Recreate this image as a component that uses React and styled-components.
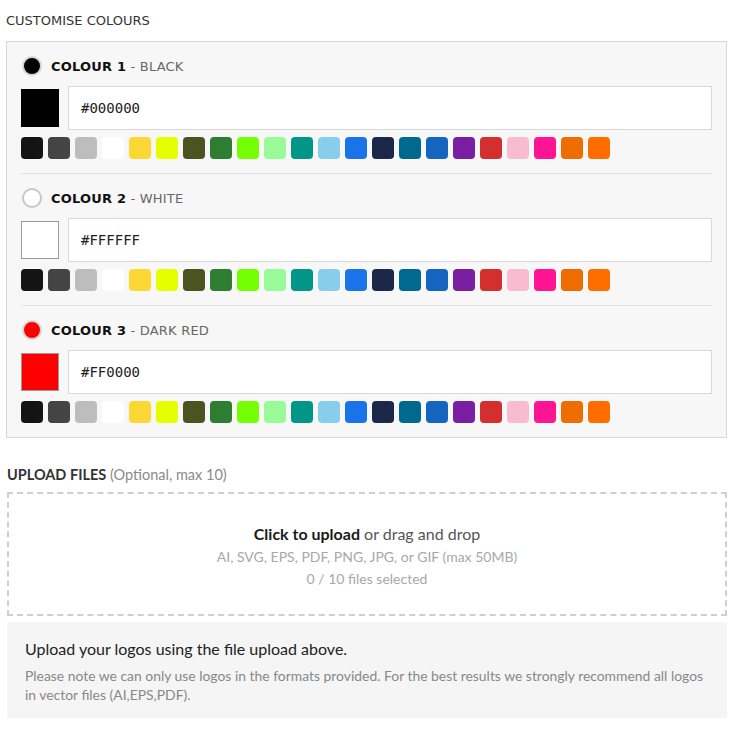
import React from "react";
import styled, { createGlobalStyle } from "styled-components";

const Global = createGlobalStyle`
  html, body { margin: 0; padding: 0; background: #ffffff; }
  body { font-family: Lato, "Noto Sans", sans-serif; color: #333; }
  * { box-sizing: border-box; }
`;

const Page = styled.div`
  width: 734px;
  padding: 11px 7px 16px 6px;
  display: flex;
  flex-direction: column;
`;

const SectionTitle = styled.div`
  font-family: "DejaVu Sans", sans-serif;
  font-size: 13px;
  line-height: 20px;
  color: #333;
  margin-bottom: 10px;
`;

const ColourBox = styled.div`
  border: 1px solid #d8d8d8;
  background: #f7f7f7;
  padding: 0 14px;
  display: flex;
  flex-direction: column;
`;

const ColourSection = styled.div`
  padding: 13px 0 14px;
  border-top: ${(p) => (p.$first ? "none" : "1px solid #e2e2e2")};
  display: flex;
  flex-direction: column;
`;

const LabelRow = styled.div`
  display: flex;
  align-items: center;
  height: 22px;
  gap: 9px;
  font-family: "DejaVu Sans", sans-serif;
  font-size: 13px;
  letter-spacing: 0.2px;
  padding-left: 1px;
`;

const Radio = styled.span`
  width: 20px;
  height: 20px;
  border-radius: 50%;
  border: 2px solid ${(p) => (p.$filled ? "#d6d6d6" : "#c8c8c8")};
  background: ${(p) => (p.$filled ? p.$color : "#ffffff")};
  flex: none;
`;

const LabelStrong = styled.span`
  font-weight: 700;
  color: #111;
`;

const LabelName = styled.span`
  color: #666;
`;

const InputRow = styled.div`
  display: flex;
  align-items: center;
  gap: 9px;
  margin-top: 9px;
`;

const BigSwatch = styled.div`
  width: 38px;
  height: 38px;
  flex: none;
  background: ${(p) => p.$color};
  border: 1px solid ${(p) => (p.$color === "#000000" ? "#000" : "#9a9a9a")};
`;

const HexInput = styled.div`
  flex: 1;
  height: 44px;
  background: #fff;
  border: 1px solid #d9d9d9;
  display: flex;
  align-items: center;
  padding-left: 12px;
  font-family: "DejaVu Sans Mono", monospace;
  font-size: 14px;
  color: #222;
`;

const Palette = styled.div`
  display: flex;
  gap: 5px;
  margin-top: 7px;
`;

const Swatch = styled.span`
  width: 22px;
  height: 22px;
  border-radius: 4px;
  background: ${(p) => p.$color};
  flex: none;
`;

const UploadTitle = styled.div`
  margin-top: 29px;
  font-size: 14.5px;
  line-height: 16px;
  padding-left: 1px;
`;

const UploadStrong = styled.span`
  font-weight: 700;
  color: #333;
`;

const UploadMuted = styled.span`
  color: #8a8a8a;
`;

const DropZone = styled.div`
  margin: 9px 0 0 1px;
  height: 124px;
  border: 2px dashed #cfcfcf;
  display: flex;
  flex-direction: column;
  align-items: center;
  justify-content: center;
  padding-top: 3px;
`;

const DropMain = styled.div`
  font-size: 16px;
  line-height: 24px;
  color: #555;
`;

const DropStrong = styled.span`
  font-weight: 700;
  color: #1a1a1a;
`;

const DropHint = styled.div`
  font-size: 14px;
  line-height: 22px;
  color: #a8a8a8;
`;

const InfoBox = styled.div`
  margin: 6px 0 0 1px;
  background: #f5f5f5;
  padding: 16px 18px 14px;
`;

const InfoTitle = styled.div`
  font-size: 16px;
  line-height: 22px;
  color: #222;
  margin-bottom: 6px;
`;

const InfoText = styled.div`
  font-size: 13.9px;
  line-height: 19px;
  color: #888;
`;

const PALETTE = [
  "#141414", "#444444", "#bdbdbd", "#ffffff", "#fdd835", "#e5ff00",
  "#4b5320", "#2e7d32", "#76ff03", "#98fb98", "#009688", "#87ceeb",
  "#1a73e8", "#1b2847", "#00698f", "#1565c0", "#7b1fa2", "#d32f2f",
  "#f8bbd0", "#ff1493", "#ef6c00", "#ff6d00",
];

const COLOURS = [
  { n: 1, name: "BLACK", hex: "#000000" },
  { n: 2, name: "WHITE", hex: "#FFFFFF" },
  { n: 3, name: "DARK RED", hex: "#FF0000" },
];

export default function App() {
  return (
    <>
      <Global />
      <Page>
        <SectionTitle>CUSTOMISE COLOURS</SectionTitle>
        <ColourBox>
          {COLOURS.map((c, i) => {
            const col = c.hex.toLowerCase();
            return (
              <ColourSection key={c.n} $first={i === 0}>
                <LabelRow>
                  <Radio $filled={col !== "#ffffff"} $color={col} />
                  <span>
                    <LabelStrong>COLOUR {c.n}</LabelStrong>
                    <LabelName> - {c.name}</LabelName>
                  </span>
                </LabelRow>
                <InputRow>
                  <BigSwatch $color={col} />
                  <HexInput>{c.hex}</HexInput>
                </InputRow>
                <Palette>
                  {PALETTE.map((p) => (
                    <Swatch key={p} $color={p} />
                  ))}
                </Palette>
              </ColourSection>
            );
          })}
        </ColourBox>

        <UploadTitle>
          <UploadStrong>UPLOAD FILES</UploadStrong>{" "}
          <UploadMuted>(Optional, max 10)</UploadMuted>
        </UploadTitle>
        <DropZone>
          <DropMain>
            <DropStrong>Click to upload</DropStrong> or drag and drop
          </DropMain>
          <DropHint>AI, SVG, EPS, PDF, PNG, JPG, or GIF (max 50MB)</DropHint>
          <DropHint>0 / 10 files selected</DropHint>
        </DropZone>
        <InfoBox>
          <InfoTitle>Upload your logos using the file upload above.</InfoTitle>
          <InfoText>
            Please note we can only use logos in the formats provided. For the
            best results we strongly recommend all logos in vector files
            (AI,EPS,PDF).
          </InfoText>
        </InfoBox>
      </Page>
    </>
  );
}
